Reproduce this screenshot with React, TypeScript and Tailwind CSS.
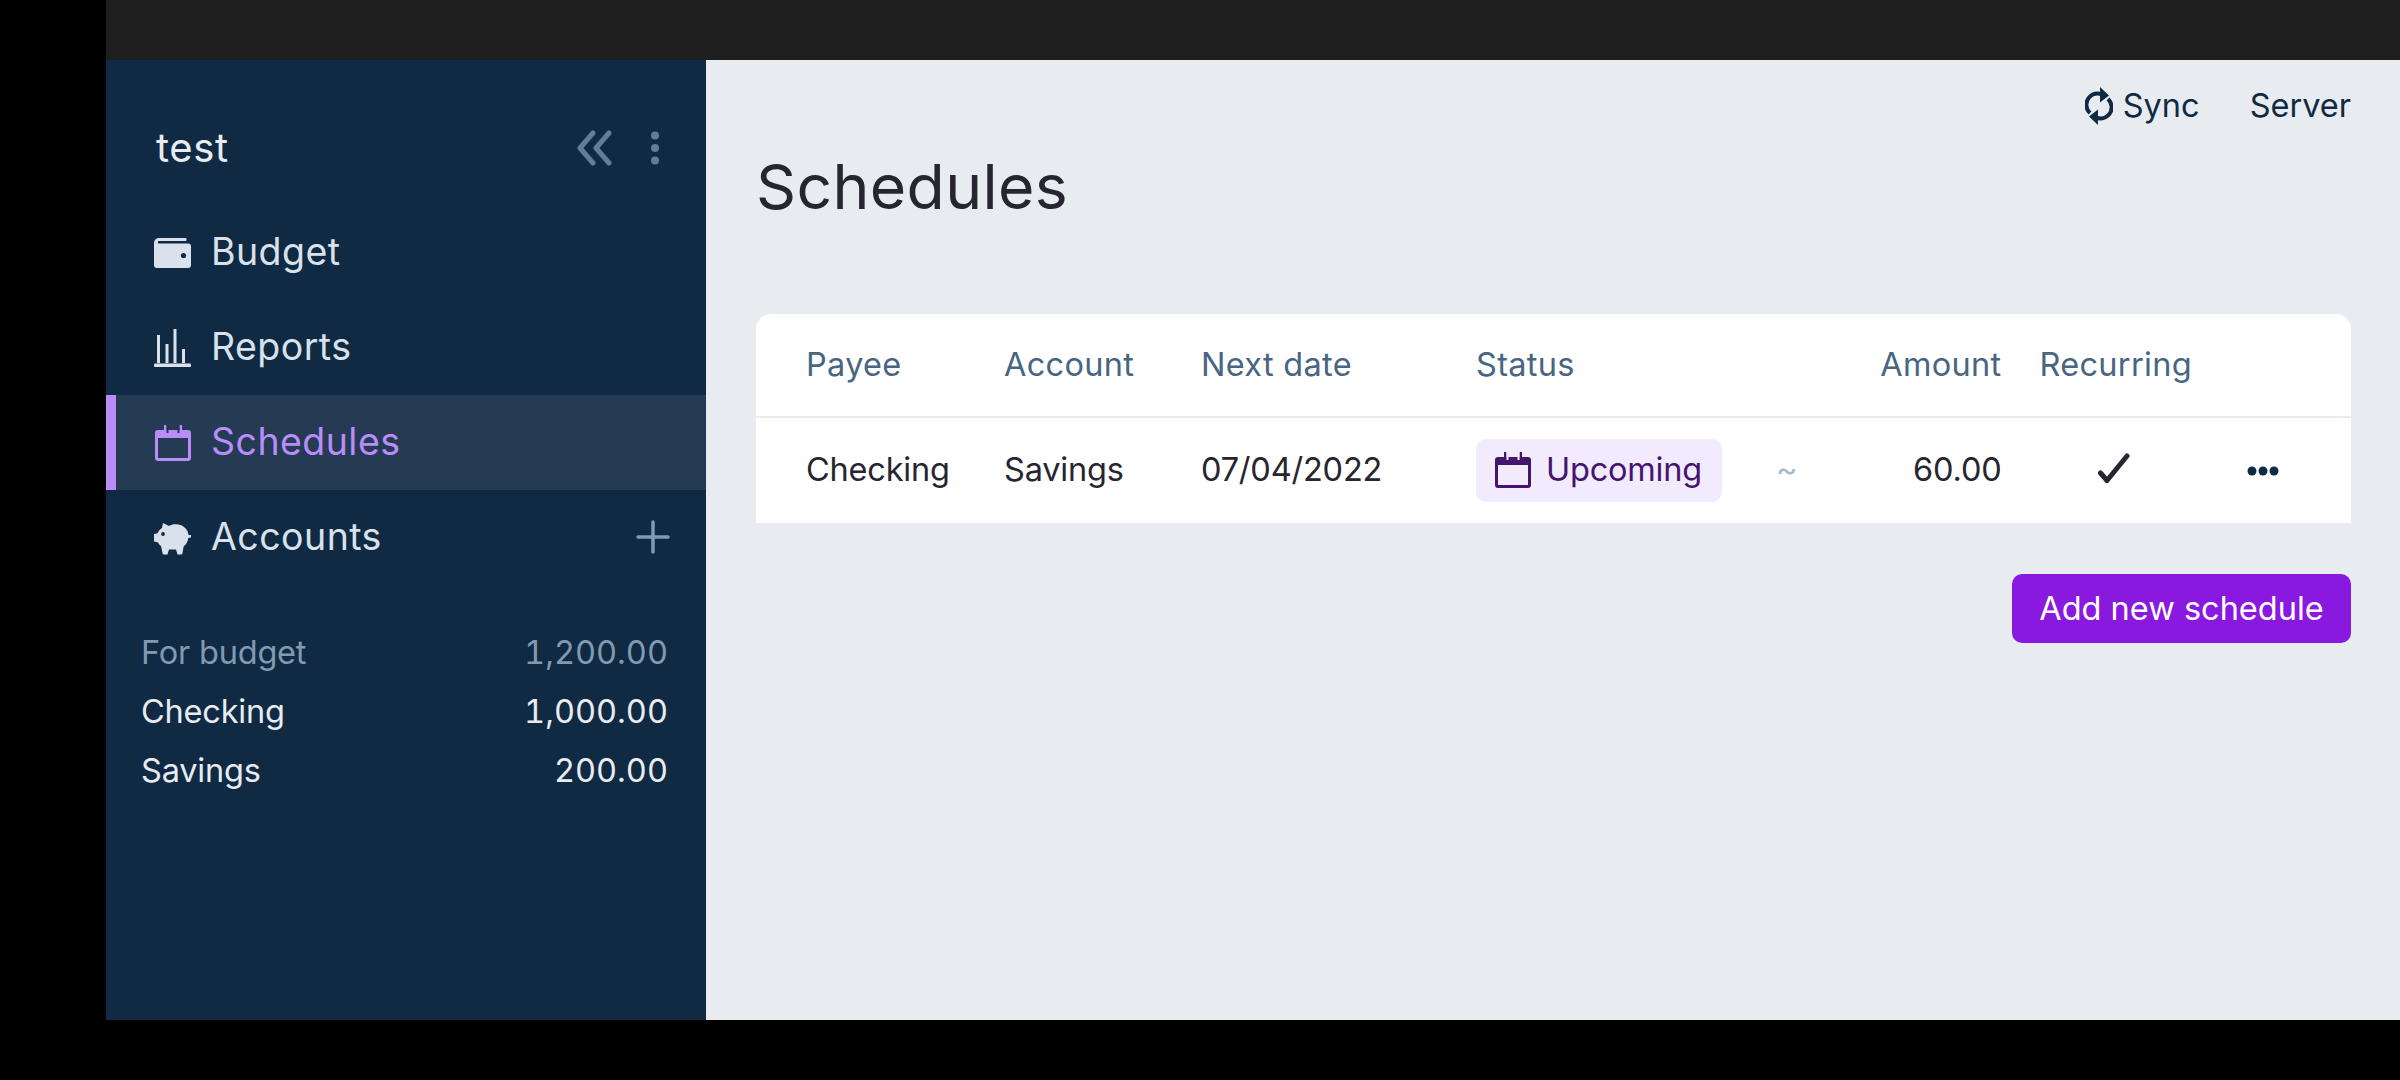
import React from 'react';

const WalletIcon = () => (
  <svg viewBox="0 0 37 30" className="w-[37px] h-[30px] fill-current">
    <path d="M5 0h27a2.5 2.5 0 0 1 0 3H4.500A1.500 1.500 0 0 0 4.500 5.500H34a3 3 0 0 1 3 3V27a3 3 0 0 1-3 3H3a3 3 0 0 1-3-3V5a5 5 0 0 1 5-5z" />
    <circle cx="29.500" cy="17.500" r="2.600" fill="#102a43" />
  </svg>
);

const ReportsIcon = () => (
  <svg viewBox="0 0 37 38" className="w-[37px] h-[38px] fill-current">
    <rect x="3" y="6" width="3" height="28" />
    <rect x="11.500" y="15" width="3" height="19" />
    <rect x="19.500" y="0" width="3" height="34" />
    <rect x="28" y="20" width="3" height="14" />
    <rect x="0" y="34.600" width="37" height="3.400" rx="1" />
  </svg>
);

const CalendarIcon = ({ cut }: { cut: string }) => (
  <svg viewBox="0 0 36 36" className="w-[36px] h-[36px]">
    <path className="fill-current" d="M9 0h2.500v5h13V0H27v5h6a3 3 0 0 1 3 3v25a3 3 0 0 1-3 3H3a3 3 0 0 1-3-3V8a3 3 0 0 1 3-3h6z" />
    <rect x="3" y="13" width="30" height="20" fill={cut} />
    <rect x="11.500" y="0" width="2" height="8" fill={cut} />
    <rect x="22.500" y="0" width="2" height="8" fill={cut} />
  </svg>
);

const PiggyIcon = () => (
  <svg viewBox="0 0 37 34" className="w-[37px] h-[34px] fill-current">
    <path d="M9 2l6 3c2-1.300 4-1.800 6.500-1.800C29 3.200 34 8 34.500 14H37v2.500l-2.700.5c-.4 3.500-2 6.500-4.700 8.500L28.500 32a1.500 1.500 0 0 1-1.500 1.500h-3.500L22 28.500h-7L13.500 33.500H10A1.500 1.500 0 0 1 8.500 32L7 25c-1.500-1-2.500-2.300-3.300-3.700L0 20.500V13l3.500-.8C4.500 10 6 8.300 8 7z" />
    <circle cx="9" cy="13" r="1.900" fill="#102a43" />
  </svg>
);

const SyncIcon = () => (
  <svg viewBox="0 0 28 40" className="w-[28px] h-[40px]" fill="none">
    <path d="M20 10.500A11 11 0 0 0 5 27M8 29.500A11 11 0 0 0 23 13" stroke="#102a43" strokeWidth="4" />
    <path d="M15 1l9 8.500-9 7zM13 39l-9-8.500 9-7z" fill="#102a43" />
  </svg>
);

const CheckIcon = () => (
  <svg viewBox="0 0 32 32" className="w-[32px] h-[32px]" fill="none">
    <path d="M2.500 20l6.500 7.500L29 3" stroke="#272630" strokeWidth="5" strokeLinecap="round" strokeLinejoin="round" />
  </svg>
);

const NavItem = ({ icon, label, active }: { icon: React.ReactNode; label: string; active?: boolean }) => (
  <div className={`flex items-center h-[95px] border-l-[10px] pl-[38px] gap-[20px] ${active ? 'bg-[#243b53] border-[#b98cf8] text-[#b98cf8]' : 'border-transparent text-[#d9e2ec]'}`}>
    <div className="w-[37px] flex justify-center">{icon}</div>
    <span className="text-[37.5px] tracking-[0.45px]">{label}</span>
  </div>
);

const Amount = ({ name, value, muted }: { name: string; value: string; muted?: boolean }) => (
  <div className={`flex justify-between items-center h-[59px] ${muted ? 'text-[#829ab1]' : 'text-[#e8ecf0]'}`}>
    <span className="tracking-[-0.2px]">{name}</span>
    <span className="tabular-nums">{value}</span>
  </div>
);

export default function App() {
  return (
    <div className="flex h-[1080px] bg-black font-['Inter',sans-serif] text-[32.5px]">
      <div className="w-[106px] shrink-0" />
      <div className="flex-1 flex flex-col">
        <div className="h-[60px] bg-[#1e1e1e]" />
        <div className="h-[960px] flex">
          {/* Sidebar */}
          <div className="w-[600px] bg-[#102a43] flex flex-col">
            <div className="h-[145px] pt-[30px] pl-[50px] pr-[46px] flex items-center justify-between">
              <span className="text-[40px] tracking-[0.6px] text-[#e8ecf0]">test</span>
              <div className="flex items-center gap-[37px]">
                <svg viewBox="0 0 36 36" className="w-[36px] h-[36px]" fill="none">
                  <path d="M16 3L3 18l13 15M32 3L19 18l13 15" stroke="#627d98" strokeWidth="5" strokeLinecap="round" strokeLinejoin="round" />
                </svg>
                <svg viewBox="0 0 10 34" className="w-[10px] h-[34px] fill-[#627d98]">
                  <circle cx="5" cy="4.500" r="4" />
                  <circle cx="5" cy="17" r="4" />
                  <circle cx="5" cy="29.500" r="4" />
                </svg>
              </div>
            </div>
            <NavItem icon={<WalletIcon />} label="Budget" />
            <NavItem icon={<ReportsIcon />} label="Reports" />
            <NavItem icon={<CalendarIcon cut="#243b53" />} label="Schedules" active />
            <div className="relative">
              <NavItem icon={<PiggyIcon />} label="Accounts" />
              <svg viewBox="0 0 34 34" className="absolute right-[36px] top-[30px] w-[34px] h-[34px]">
                <path d="M17 2v30M2 17h30" stroke="#829ab1" strokeWidth="3.500" strokeLinecap="round" />
              </svg>
            </div>
            <div className="mt-[39px] pl-[35px] pr-[38px]">
              <Amount name="For budget" value="1,200.00" muted />
              <Amount name="Checking" value="1,000.00" />
              <Amount name="Savings" value="200.00" />
            </div>
          </div>

          {/* Main */}
          <div className="flex-1 bg-[#e8ecf0] pl-[50px] pr-[49px]">
            <div className="h-[90px] pt-[2px] flex items-center justify-end text-[#102a43]">
              <SyncIcon />
              <span className="ml-[10px]">Sync</span>
              <span className="ml-[50px]">Server</span>
            </div>
            <div className="h-[75px] pb-[2px] flex items-center text-[62.5px] tracking-[0.35px] text-[#272630]">Schedules</div>
            <div className="mt-[89px] bg-white rounded-t-[15px] text-[#272630]">
              <div className="h-[104px] flex items-center pl-[50px] border-b-2 border-[#e8ecf0] text-[#486581] tracking-[0.3px]">
                <div className="w-[198px]">Payee</div>
                <div className="w-[197px]">Account</div>
                <div className="w-[275px]">Next date</div>
                <div className="w-[300px]">Status</div>
                <div className="w-[225.5px] text-right">Amount</div>
                <div className="w-[186.5px] text-center pl-[38px]">Recurring</div>
              </div>
              <div className="h-[105px] flex items-center pl-[50px] tracking-[-0.2px]">
                <div className="w-[198px]">Checking</div>
                <div className="w-[197px]">Savings</div>
                <div className="w-[275px]">07/04/2022</div>
                <div className="w-[300px]">
                  <div className="inline-flex items-center h-[63px] w-[246px] pl-[19px] gap-[15px] rounded-[10px] bg-[#f2ebfd] text-[#44146f]">
                    <CalendarIcon cut="#f2ebfd" />
                    <span>Upcoming</span>
                  </div>
                </div>
                <div className="w-[225.5px] flex items-center justify-between">
                  <span className="text-[#a6bacd]">~</span>
                  <span>60.00</span>
                </div>
                <div className="w-[186.5px] pl-[38px] pb-[4px] flex justify-center">
                  <CheckIcon />
                </div>
                <div className="w-[150px] flex justify-center">
                  <svg viewBox="0 0 32 10" className="w-[32px] h-[10px] fill-[#102a43]">
                    <circle cx="5" cy="5" r="4.500" />
                    <circle cx="16" cy="5" r="4.500" />
                    <circle cx="27" cy="5" r="4.500" />
                  </svg>
                </div>
              </div>
            </div>
            <div className="mt-[51px] flex justify-end">
              <button className="h-[69px] w-[339px] pt-[2px] rounded-[10px] bg-[#8a19e0] text-white">Add new schedule</button>
            </div>
          </div>
        </div>
      </div>
    </div>
  );
}
